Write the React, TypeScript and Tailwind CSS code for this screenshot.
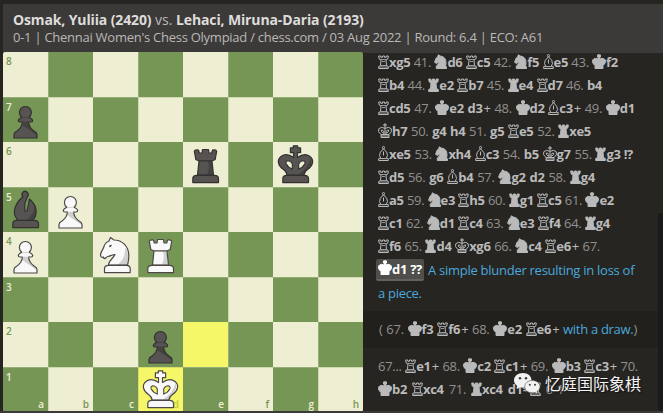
import type { ReactNode } from "react";

type Piece = "P" | "N" | "B" | "R" | "K";

const position: Record<string, { piece: Piece; white: boolean }> = {
  a7: { piece: "P", white: false },
  e6: { piece: "R", white: false },
  g6: { piece: "K", white: false },
  a5: { piece: "B", white: false },
  b5: { piece: "P", white: true },
  a4: { piece: "P", white: true },
  c4: { piece: "N", white: true },
  d4: { piece: "R", white: true },
  d2: { piece: "P", white: false },
  d1: { piece: "K", white: true },
};

const outlines: Record<Piece, string> = {
  P: "M11 41V37.500Q11 35.500 14 34Q19 30.500 19.500 25H17Q15.300 25 15.300 23.500Q15.300 22.300 18.800 20.300A6 6 0 1 1 26 20.300Q29.700 22.300 29.700 23.500Q29.700 25 28 25H25.500Q26 30.500 31 34Q34 35.500 34 37.500V41Z",
  N: "M15.500 33C15.500 29 20 26.500 22 22.500C18 23 17 24 15 24.500C13 25 12.500 27 11 26.500L10.500 25C9 26 7.500 25 7.500 23C7.500 20 10 18 11 14.500C11.500 12 14 10 16 9L17.500 5.500L21 8C29 8 35.500 14 35.800 23C36 28 35 31 34.500 33Z",
  B: "M15 33.500C11 29 10.500 24 12.500 19.500C14.500 15 17 12 20 9.800A3.100 3.100 0 1 1 24.500 9.500L21.800 16.500V24H24L26.500 12Q32 17 33 22Q34 29 29.500 33.500Z",
  R: "M14.500 33L16 19L12.800 17.500L11.300 9Q12.500 7.500 15.500 8L16.300 11H19L19.500 7.500H25.500L26 11H28.700L29.500 8Q32.500 7.500 33.700 9L32.200 17.500L29 19L30.500 33Z",
  K: "M14 33Q14 30 10.500 27.500C5 23.500 3.500 18 8 14.500C12 11.500 17 13 20.500 15.500V10.700H17.400V5.900H20.300V3.800H24.700V5.900H27.600V10.700H24.500V15.500C28 13 33 11.500 37 14.500C41.500 18 40 23.500 34.500 27.500Q31 30 31 33Z",
};

const shades: Record<Piece, string> = {
  P: "M19.500 25H25.500Q26 30.500 31 34L33.500 36.500V38Q25 32 20 28.500Z",
  N: "M32 15Q35.800 20 35.300 26L34 33H24Q33 27 32 15Z",
  B: "M31.500 17.500Q35.500 27 29.500 33H23Q31 29 31.500 17.500Z",
  R: "M25 19.500H28.500L30 32.500H24Q27 26 25 19.500Z",
  K: "M37.500 16Q40 21 34.500 27L30.500 32.500H25Q36 25 37.500 16Z",
};

function BoardPiece({ piece, white }: { piece: Piece; white: boolean }) {
  const fill = white ? "#f9f9f9" : "#565352";
  const line = white ? "#4b4847" : "#333130";
  const shade = white ? "#d0d0d0" : "#454241";
  const baseX = piece === "N" ? 11.5 : 9.8;
  return (
    <svg viewBox="0 0 45 45" className="absolute inset-0 h-[45px] w-[45px]">
      <path d={outlines[piece]} fill={fill} fillRule="evenodd" />
      <path d={shades[piece]} fill={shade} />
      <path d={outlines[piece]} fill="none" stroke={line} strokeWidth="1.2" strokeLinejoin="round" />
      {piece === "K" && (
        <path
          d="M19.300 27V22Q18 18.700 14.500 18.700Q12.200 19.500 13.300 22Q15 25.500 19.300 27ZM25.700 27V22Q27 18.700 30.500 18.700Q32.800 19.500 31.700 22Q30 25.500 25.700 27Z"
          fill={white ? "#f4f566" : "#eeeed2"}
          stroke={line}
          strokeWidth="1.100"
        />
      )}
      {piece === "R" && <path d="M16 18.900H29" stroke={line} strokeWidth="1.300" />}
      {piece === "N" && <path d="M16.200 14.600L18.500 13.300" stroke={line} strokeWidth="1.600" />}
      {piece === "P" && <path d="M19 20.500H26M19.500 25.200H25.500" stroke={shade} strokeWidth="0.900" />}
      {piece !== "P" && (
        <path
          d={`M${baseX} 40.600V36.500Q${baseX} 33.600 ${baseX + 4} 33.400H${baseX + 21.7}Q${baseX + 25.7} 33.600 ${baseX + 25.7} 36.500V40.600Z`}
          fill={fill}
          stroke={line}
          strokeWidth="1.200"
          strokeLinejoin="round"
        />
      )}
    </svg>
  );
}

const files = ["a", "b", "c", "d", "e", "f", "g", "h"];
const ranks = [8, 7, 6, 5, 4, 3, 2, 1];

function Square({ file, rank }: { file: string; rank: number }) {
  const key = file + rank;
  const col = files.indexOf(file);
  const dark = (col + rank) % 2 === 1;
  const lit = key === "d1" || key === "e2";
  const entry = position[key];
  const bg = lit ? "bg-[#f5f668]" : dark ? "bg-[#769656]" : "bg-[#eeeed2]";
  const edge = lit ? "border-[#d7dd68]" : dark ? "border-[#94ae78]" : "border-[#cfd8b0]";
  const ink = lit ? "text-[#c5c93a]" : dark ? "text-[#eeeed2]" : "text-[#769656]";
  return (
    <div
      className={`relative h-[45px] w-[45px] ${bg} ${edge} ${col % 2 === 1 ? "border-l" : ""} ${rank % 2 === 1 ? "border-t" : ""}`}
    >
      <div className={`absolute inset-0 text-[10px] leading-[10px] font-semibold ${ink}`}>
        {file === "a" && <span className="absolute top-[4px] left-[3px]">{rank}</span>}
        {rank === 1 && <span className="absolute right-[4px] bottom-[3px]">{file}</span>}
      </div>
      {entry && (
        <div className={`absolute ${col % 2 === 1 ? "-left-px" : "left-0"} ${rank % 2 === 1 ? "-top-px" : "top-0"}`}>
          <div className="relative h-[45px] w-[45px]">
            <BoardPiece {...entry} />
          </div>
        </div>
      )}
    </div>
  );
}

/* Figurines in the move list: solid for White, outlined for Black. */
function Figurine({ name }: { name: string }) {
  const solid = name === name.toUpperCase();
  const kind = name.toUpperCase();
  const width = kind === "K" ? 14 : kind === "N" ? 13 : 11;
  const fill = solid ? "currentColor" : "none";
  return (
    <svg
      width={width}
      height="15"
      viewBox={`0 0 ${width} 15`}
      className="mb-[5px] inline-block shrink-0 self-end"
      fill={fill}
      stroke="currentColor"
      strokeWidth="1"
      strokeLinejoin="round"
    >
      {kind === "R" && (
        <>
          <path d="M0.700 14.500V12.500L2.500 11.500L3 6L1.200 5L0.700 2H2.800V3.300H4.500V2H6.500V3.300H8.200V2H10.300L9.800 5L8 6L8.500 11.500L10.300 12.500V14.500Z" />
          {!solid && <path d="M3 5.500H8M2.500 11.500H8.500M1 13H10M4 7.500H7" strokeWidth="0.800" />}
        </>
      )}
      {kind === "K" && (
        <>
          <path d="M7 0.300V5M5 2H9" strokeWidth={solid ? 2.4 : 1.2} />
          <path d="M3 14.500V11.500Q-0.800 8.700 0.800 5.700Q3.500 3 7 5.500Q10.500 3 13.200 5.700Q14.800 8.700 11 11.500V14.500Z" />
          {!solid && (
            <path d="M7 6V11M5.800 10.500V8.500Q5 6.800 3.400 7Q2.500 8.500 5.800 10.500M8.200 10.500V8.500Q9 6.800 10.600 7Q11.500 8.500 8.200 10.500M3 11.500H11M3 13H11" />
          )}
        </>
      )}
      {kind === "N" && (
        <path d="M2.300 14.500V12.300L6 8L4 8.400L2.500 9.600L0.600 8.300L2 4.300L3.800 2.700L4.300 0.800L6.200 2Q12 2.500 12 9L11.500 12L12.500 13V14.500Z" />
      )}
      {kind === "B" && (
        <>
          <circle cx="5.500" cy="1.600" r="1.100" />
          <path d="M0.700 14.500V12.600H2.800Q0.500 9.500 2.300 6.300L5.500 2.700L8.700 6.300Q10.500 9.500 8.200 12.600H10.300V14.500ZM2.800 12.600H8.200M5.500 5.500V9.500" />
        </>
      )}
    </svg>
  );
}

/* "41." is a move number; a leading ":" marks a figurine letter, e.g. ":Rf2". */
function Token({ text }: { text: string }) {
  if (/^\(?\d+\.+$/.test(text) || text === "(" || text === "0-1") {
    return <span className="text-[#92908e]">{text}</span>;
  }
  const hasPiece = text.startsWith(":");
  const body = hasPiece ? text.slice(2) : text;
  const check = body.endsWith("+");
  const [move, promotion] = (check ? body.slice(0, -1) : body).split("=:");
  return (
    <span className="inline-flex font-bold">
      {hasPiece && <Figurine name={text[1]} />}
      <span>{promotion ? `${move}=` : move}</span>
      {promotion && <Figurine name={promotion} />}
      {check && <span className="pl-px font-normal">+</span>}
    </span>
  );
}

function Line({ moves, width, children }: { moves: string; width: string; children?: ReactNode }) {
  return (
    <div className={`flex h-[23px] justify-between whitespace-nowrap ${width}`}>
      {moves.split(" ").map((m, i) => (
        <Token key={i} text={m.replace("_", " ")} />
      ))}
      {children}
    </div>
  );
}

export default function App() {
  return (
    <div className="relative flex h-[413px] w-[663px] flex-col overflow-hidden bg-[#272522] pt-1 pl-[3px] font-['Open_Sans','Noto_Sans',sans-serif]">
      <header className="h-[48px] shrink-0 bg-[#3c3a38] pt-[5px] pl-[10px] whitespace-nowrap">
        <div className="h-[20px] text-[14px] leading-[22px] text-[#b9b8b7]">
          <b className="tracking-[-0.13px] text-[#dedddc]">Osmak, Yuliia (2420)</b> vs.{" "}
          <b className="tracking-[-0.13px] text-[#dedddc]">Lehaci, Miruna-Daria (2193)</b>
        </div>
        <div className="text-[13px] leading-[17px] tracking-[-0.26px] text-[#b9b8b7]">
          0-1 | Chennai Women's Chess Olympiad / chess.com / 03 Aug 2022 | Round: 6.4 | ECO: A61
        </div>
      </header>
      <main className="flex h-[361px] shrink-0">
        <div className="grid h-[360px] w-[360px] shrink-0 grid-cols-8 overflow-hidden rounded-[2px]">
          {ranks.map((rank) => files.map((file) => <Square key={file + rank} file={file} rank={rank} />))}
        </div>
        <section className="h-[359px] flex-1 overflow-hidden border-t border-[#3c3a38] text-[13px] leading-[23px] tracking-[-0.3px] text-[#bababa]">
          <div className="flex h-full">
            <div className="w-[295px] shrink-0">
              <div className="-mt-[2px] h-[260px] pl-[15px]">
                <Line width="w-[240px]" moves=":rxg5 41. :Nd6 :rc5 42. :Nf5 :be5 43. :Kf2" />
                <Line width="w-[224px]" moves=":rb4 44. :Re2 :rb7 45. :Re4 :rd7 46. b4" />
                <Line width="w-[257px]" moves=":rcd5 47. :Ke2 d3+ 48. :Kd2 :bc3+ 49. :Kd1" />
                <Line width="w-[213px]" moves=":kh7 50. g4 h4 51. g5 :re5 52. :Rxe5" />
                <Line width="w-[255px]" moves=":bxe5 53. :Nxh4 :bc3 54. b5 :kg7 55. :Rg3_!?" />
                <Line width="w-[217px]" moves=":rd5 56. g6 :bb4 57. :Ng2 d2 58. :Rg4" />
                <Line width="w-[236px]" moves=":ba5 59. :Ne3 :rh5 60. :Rg1 :rc5 61. :Ke2" />
                <Line width="w-[232px]" moves=":rc1 62. :Nd1 :rc4 63. :Ne3 :rf4 64. :Rg4" />
                <Line width="w-[222px]" moves=":rf6 65. :Rd4 :kxg6 66. :Nc4 :re6+ 67." />
                <div className="flex h-[23px] whitespace-nowrap">
                  <span className="mt-px -ml-[2px] flex h-[22px] w-[48px] items-center justify-center rounded-[2px] border-b-2 border-[#64625f] bg-[#504e4b] leading-[22px] text-white">
                    <Token text=":Kd1 ??" />
                  </span>
                  <span className="ml-[4px] pt-px tracking-[-0.27px] text-[#4aa9dc]">
                    A simple blunder resulting in loss of
                  </span>
                </div>
                <div className="pt-px text-[#4aa9dc]">a piece.</div>
              </div>
              <div className="h-[37px] bg-[#21201d] pt-[7px] pl-[16px]">
                <Line width="w-[258px]" moves="( 67. :Kf3 :rf6+ 68. :Ke2 :re6+">
                  <span className="text-[#4aa9dc]">
                    with a draw.<span className="text-[#92908e]">)</span>
                  </span>
                </Line>
              </div>
              <div className="pt-[7px] pl-[15px]">
                <Line width="w-[260px]" moves="67... :re1+ 68. :Kc2 :rc1+ 69. :Kb3 :rc3+ 70." />
                <Line width="w-[186px]" moves=":Kb2 :rxc4 71. :Rxc4 d1=:r 0-1" />
              </div>
            </div>
            <div className="mt-[160px] h-[198px] w-[5px] rounded-l-[3px] bg-[#1b1a18]" />
          </div>
        </section>
      </main>
      <div className="absolute right-0 bottom-0 left-0 h-[2px] bg-[#3c3a38]" />
      <div className="absolute top-[371px] left-[513px] flex items-center gap-[4px]">
        <svg width="28" height="23" viewBox="0 0 28 23">
          <path
            d="M10 1C4.800 1 1 4.200 1 8.300C1 10.700 2.300 12.700 4.300 14L3.700 17L7 15.300L10 15.700C15 15.700 18.500 12.500 18.500 8.300S15 1 10 1Z"
            fill="#f2f2f2"
          />
          <path
            d="M19.300 8.500C15 8.500 11.700 11.200 11.700 14.700S15 20.800 19.300 20.800L22 20.400L24.800 22L24.200 19.300C26 18.200 27 16.600 27 14.700C27 11.200 23.600 8.500 19.300 8.500Z"
            fill="#f2f2f2"
            stroke="#555350"
            strokeWidth="0.600"
          />
          <circle cx="7" cy="6.300" r="1.200" fill="#3a3937" />
          <circle cx="13" cy="6.300" r="1.200" fill="#3a3937" />
          <circle cx="16.800" cy="12.800" r="1" fill="#3a3937" />
          <circle cx="22" cy="12.800" r="1" fill="#3a3937" />
        </svg>
        <span className="font-['Noto_Sans_CJK_SC',sans-serif] text-[16px] leading-[24px] text-[#f4f4f4] [text-shadow:1px_1px_1px_#111]">
          忆庭国际象棋
        </span>
      </div>
    </div>
  );
}
